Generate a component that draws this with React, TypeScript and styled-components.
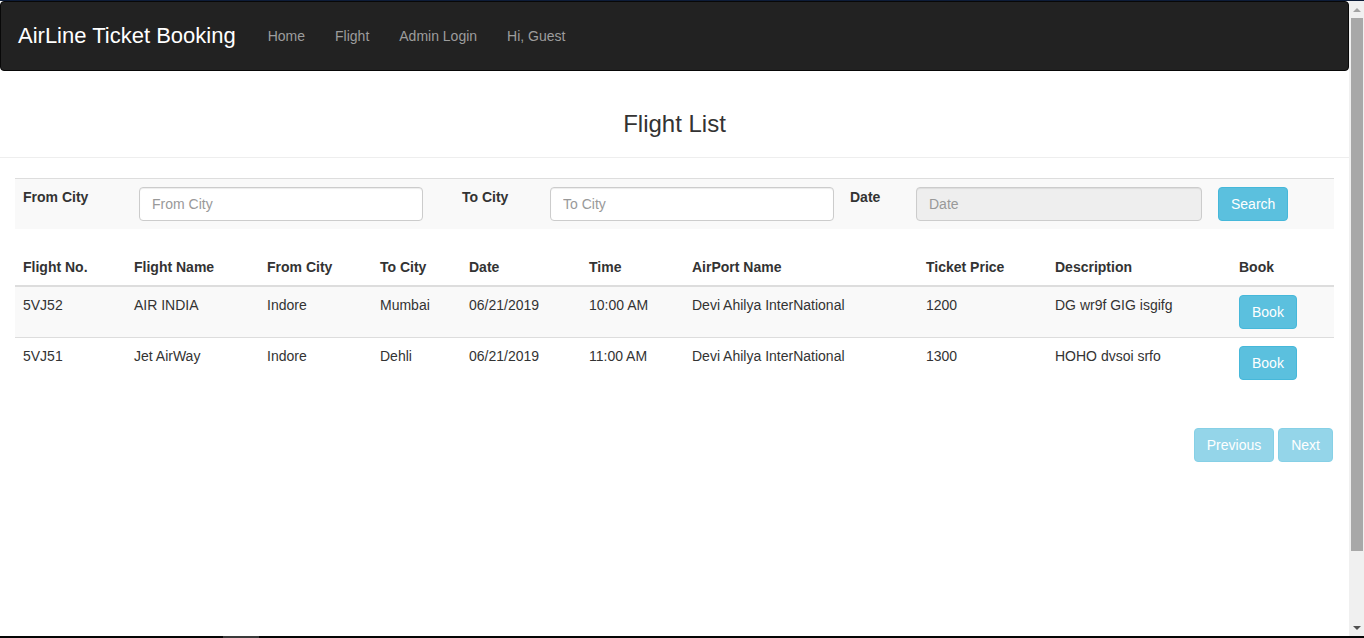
import React from "react";
import styled, { createGlobalStyle, css } from "styled-components";

const GlobalStyle = createGlobalStyle`
  html, body { margin: 0; padding: 0; height: 100%; overflow: hidden; }
  body {
    font-family: "Liberation Sans", Arial, Helvetica, sans-serif;
    font-size: 14px;
    line-height: 20px;
    color: #333;
    background: #fff;
  }
  * { box-sizing: border-box; }
`;

const Frame = styled.div`
  height: 100vh;
  display: flex;
  flex-direction: column;
  border-top: 1px solid #0d1c38;
`;

const Viewport = styled.div`
  flex: 1;
  min-height: 0;
  display: flex;
`;

const Main = styled.main`
  flex: 1;
  min-width: 0;
  overflow: hidden;
`;

const Navbar = styled.nav`
  height: 70px;
  display: flex;
  align-items: center;
  background: #222;
  border: 1px solid #080808;
  border-radius: 4px;
  padding-left: 17px;
`;

const Brand = styled.a`
  font-size: 22px;
  line-height: 26px;
  color: #fff;
  text-decoration: none;
  margin-right: 17px;
`;

const NavLink = styled.a`
  font-size: 14px;
  color: #9d9d9d;
  padding: 0 15px;
  text-decoration: none;
`;

const Title = styled.h3`
  margin: 40px 0 20px;
  font-size: 24px;
  font-weight: 400;
  line-height: 26px;
  text-align: center;
  color: #333;
`;

const Divider = styled.hr`
  margin: 0 0 20px;
  border: 0;
  border-top: 1px solid #eee;
`;

const Container = styled.div`
  padding: 0 15px;
`;

const Table = styled.table`
  width: 100%;
  table-layout: fixed;
  border-collapse: collapse;
  border-spacing: 0;
  margin-bottom: 20px;
`;

const Cell = styled.td<{ $head?: boolean }>`
  padding: 8px;
  vertical-align: top;
  text-align: left;
  white-space: nowrap;
  ${(p) =>
    p.$head &&
    css`
      font-weight: 700;
    `}
`;

const HeadCell = styled.th`
  padding: 8px;
  vertical-align: bottom;
  text-align: left;
  font-weight: 700;
  white-space: nowrap;
  border-bottom: 2px solid #ddd;
`;

const Row = styled.tr<{ $striped?: boolean; $bordered?: boolean }>`
  background: ${(p) => (p.$striped ? "#f9f9f9" : "transparent")};
  ${(p) =>
    p.$bordered &&
    css`
      border-top: 1px solid #ddd;
    `}
`;

const Input = styled.input<{ $width: number }>`
  display: block;
  width: ${(p) => p.$width}px;
  height: 34px;
  padding: 6px 12px;
  font-family: inherit;
  font-size: 14px;
  color: #555;
  background: #fff;
  border: 1px solid #ccc;
  border-radius: 4px;
  box-shadow: inset 0 1px 1px rgba(0, 0, 0, 0.075);
  outline: none;
  &::placeholder { color: #999; }
  &:disabled { background: #eee; cursor: not-allowed; }
`;

const Button = styled.button<{ $disabled?: boolean }>`
  display: inline-block;
  height: 34px;
  padding: 6px 12px;
  font-family: inherit;
  font-size: 14px;
  line-height: 20px;
  color: #fff;
  background: #5bc0de;
  border: 1px solid #46b8da;
  border-radius: 4px;
  cursor: pointer;
  ${(p) =>
    p.$disabled &&
    css`
      opacity: 0.65;
      cursor: not-allowed;
    `}
`;

const Pager = styled.div`
  display: flex;
  justify-content: flex-end;
  gap: 4px;
  margin-top: 40px;
  padding-right: 1px;
`;

const Scrollbar = styled.div`
  width: 15px;
  background: #f0f0f0;
  display: flex;
  flex-direction: column;
`;

const Arrow = styled.div<{ $down?: boolean; $height: number }>`
  height: ${(p) => p.$height}px;
  display: flex;
  align-items: center;
  justify-content: center;
  &::after {
    content: "";
    width: 0;
    height: 0;
    border-left: 4px solid transparent;
    border-right: 4px solid transparent;
    ${(p) =>
      p.$down
        ? css`border-top: 4px solid #505050;`
        : css`border-bottom: 4px solid #a3a3a3;`}
  }
`;

const Thumb = styled.div`
  height: 533px;
  margin: 0 1px 0 2px;
  background: #a8a8a8;
`;

const Spacer = styled.div`
  flex: 1;
`;

const BottomBar = styled.div`
  height: 2px;
  background: #050505;
  display: flex;
  padding-left: 223px;
`;

const BarSegment = styled.div`
  width: 36px;
  background: #3a3a3a;
`;

const searchCols = [116, 323, 88, 300, 66, 302, 124];
const dataCols = [111, 133, 113, 89, 120, 103, 234, 129, 184, 103];

const headers = [
  "Flight No.",
  "Flight Name",
  "From City",
  "To City",
  "Date",
  "Time",
  "AirPort Name",
  "Ticket Price",
  "Description",
  "Book",
];

const flights = [
  ["5VJ52", "AIR INDIA", "Indore", "Mumbai", "06/21/2019", "10:00 AM", "Devi Ahilya InterNational", "1200", "DG wr9f GIG isgifg"],
  ["5VJ51", "Jet AirWay", "Indore", "Dehli", "06/21/2019", "11:00 AM", "Devi Ahilya InterNational", "1300", "HOHO dvsoi srfo"],
];

export default function App() {
  return (
    <>
      <GlobalStyle />
      <Frame>
        <Viewport>
          <Main>
            <Navbar>
              <Brand href="#">AirLine Ticket Booking</Brand>
              <NavLink href="#">Home</NavLink>
              <NavLink href="#">Flight</NavLink>
              <NavLink href="#">Admin Login</NavLink>
              <NavLink href="#">Hi, Guest</NavLink>
            </Navbar>
            <Title>Flight List</Title>
            <Divider />
            <Container>
              <Table>
                <colgroup>
                  {searchCols.map((w, i) => (
                    <col key={i} style={{ width: w }} />
                  ))}
                </colgroup>
                <tbody>
                  <Row $striped $bordered>
                    <Cell $head>From City</Cell>
                    <Cell>
                      <Input $width={284} placeholder="From City" />
                    </Cell>
                    <Cell $head>To City</Cell>
                    <Cell>
                      <Input $width={284} placeholder="To City" />
                    </Cell>
                    <Cell $head>Date</Cell>
                    <Cell>
                      <Input $width={286} placeholder="Date" disabled />
                    </Cell>
                    <Cell>
                      <Button>Search</Button>
                    </Cell>
                  </Row>
                </tbody>
              </Table>
              <Table>
                <colgroup>
                  {dataCols.map((w, i) => (
                    <col key={i} style={{ width: w }} />
                  ))}
                </colgroup>
                <thead>
                  <tr>
                    {headers.map((h) => (
                      <HeadCell key={h}>{h}</HeadCell>
                    ))}
                  </tr>
                </thead>
                <tbody>
                  {flights.map((f, i) => (
                    <Row key={f[0]} $striped={i % 2 === 0} $bordered={i > 0}>
                      {f.map((v, j) => (
                        <Cell key={j}>{v}</Cell>
                      ))}
                      <Cell>
                        <Button>Book</Button>
                      </Cell>
                    </Row>
                  ))}
                </tbody>
              </Table>
              <Pager>
                <Button $disabled>Previous</Button>
                <Button $disabled>Next</Button>
              </Pager>
            </Container>
          </Main>
          <Scrollbar>
            <Arrow $height={17} />
            <Thumb />
            <Spacer />
            <Arrow $down $height={17} />
          </Scrollbar>
        </Viewport>
        <BottomBar>
          <BarSegment />
        </BottomBar>
      </Frame>
    </>
  );
}
